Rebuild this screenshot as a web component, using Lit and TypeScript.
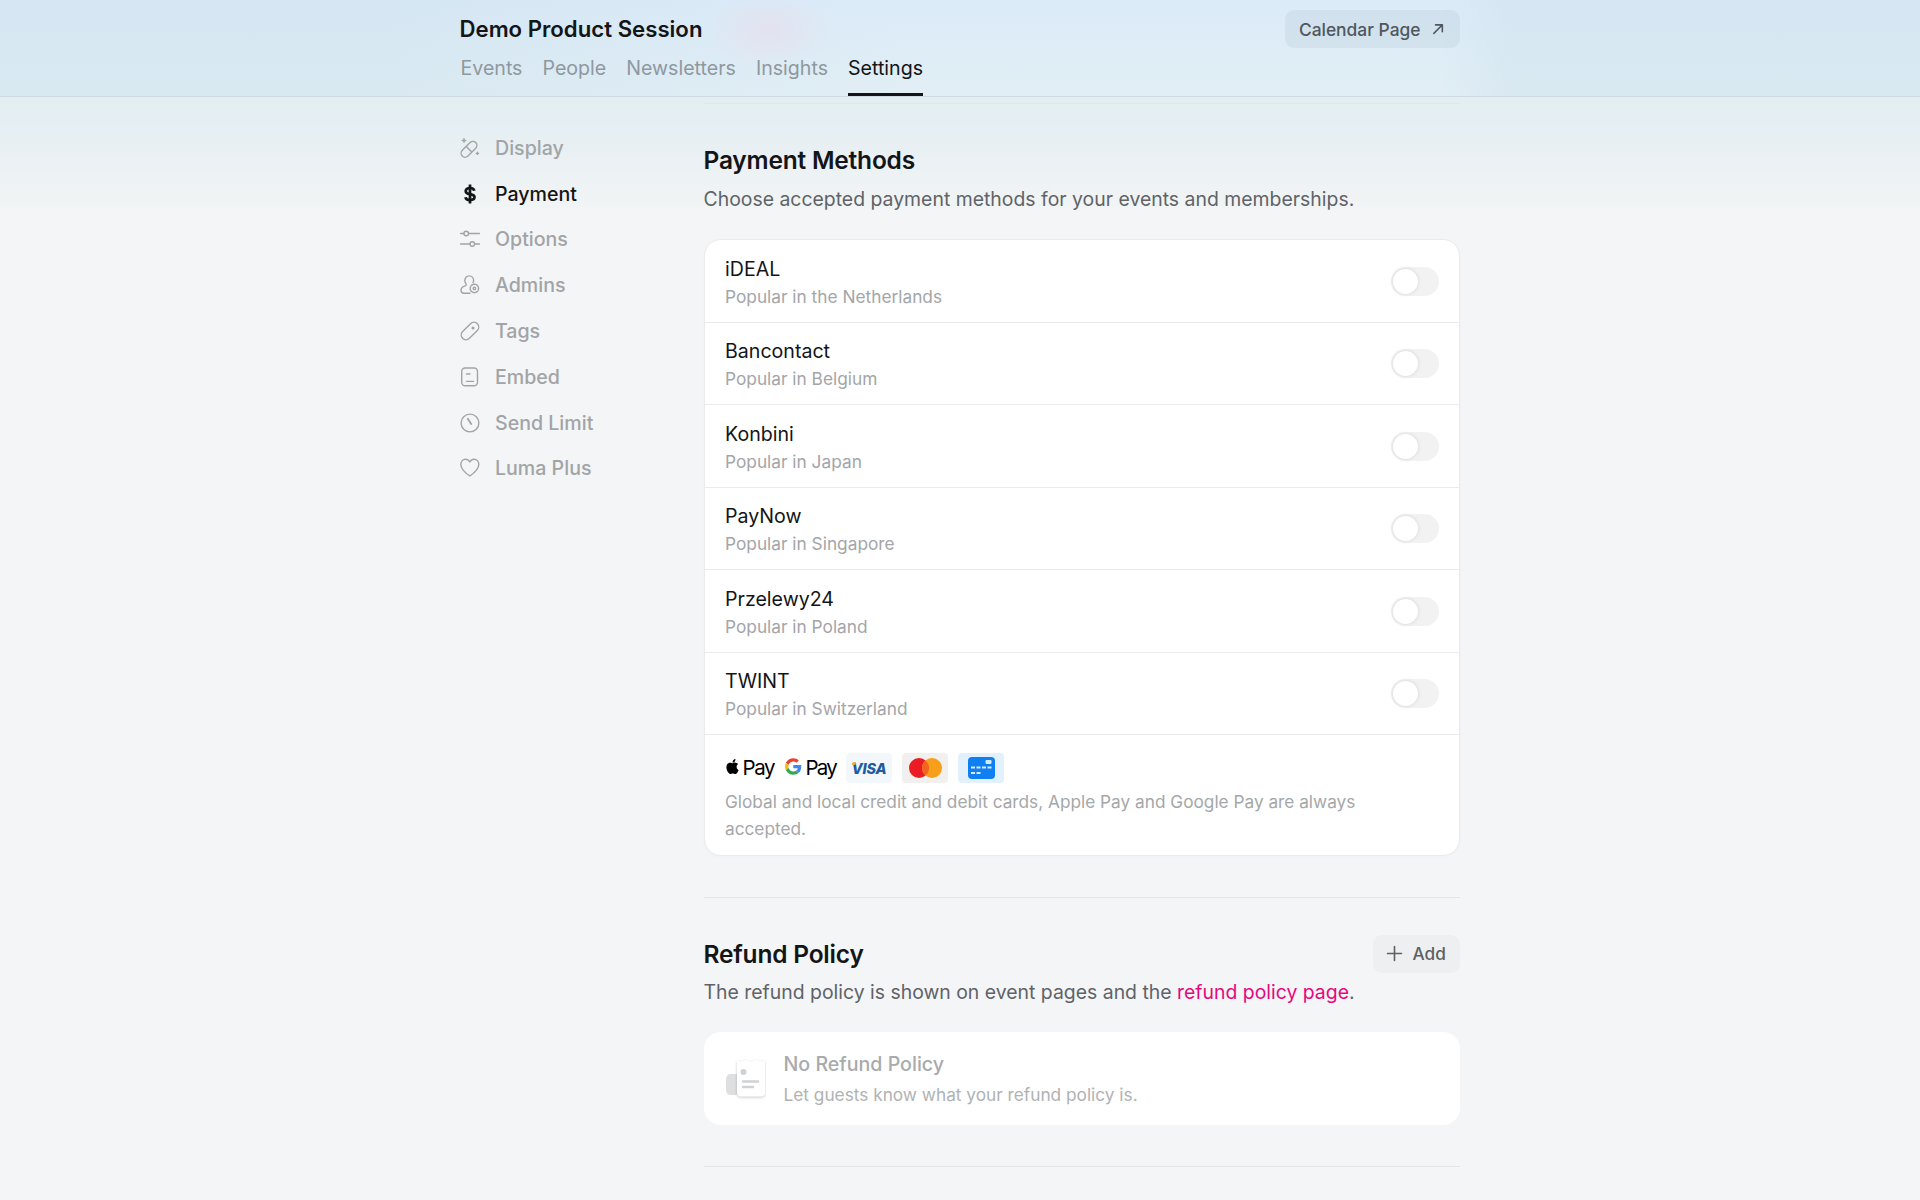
import { LitElement, html, css, svg } from "lit";
import { customElement } from "lit/decorators.js";

const stroke = (content: unknown) => html`<svg class="ico" viewBox="0 0 20 20" fill="none" stroke="currentColor" stroke-width="1.4" stroke-linecap="round" stroke-linejoin="round">${content}</svg>`;

const navIcons: Record<string, unknown> = {
  Display: stroke(svg`<rect x="-9.500" y="-4" width="19" height="8" rx="4" transform="translate(9 11.300) rotate(-45)"/><path d="M6.700 9l4.600 4.600"/><path d="M4 .8v3.400M2.300 2.500h3.400M17.400 14.200v2.400M16.200 15.400h2.400"/>`),
  Payment: html`<svg class="ico" viewBox="0 0 20 20" fill="none" stroke="currentColor" stroke-width="2.700" stroke-linecap="butt"><path d="M14.300 6.800C14 5 12.200 4 10 4 7.400 4 5.700 5.300 5.700 7.200c0 4.200 8.800 1.800 8.800 5.900 0 1.900-1.800 3-4.500 3-2.500 0-4.200-1-4.600-2.900"/><path d="M10 .5v19"/></svg>`,
  Options: stroke(svg`<path d="M.6 4.500h3.200M8.600 4.500h10.800M.6 15h9.300M14.700 15h4.700"/><circle cx="6.200" cy="4.500" r="2.300"/><circle cx="12.300" cy="15" r="2.300"/>`),
  Admins: stroke(svg`<path d="M10 18.300H4.200C2.300 18.300 1 17.100 1 15.300c0-2 1.300-3.300 3.600-4.100 1.500-.5 2-1.600 1.200-2.800C5.100 7.500 4.800 6.500 4.800 5.500 4.800 2.800 6.700.9 9.200.9s4.400 1.900 4.400 4.600c0 .8-.2 1.500-.5 2.100"/><circle cx="14.400" cy="13.400" r="4.200" stroke-dasharray="2.200 .9"/><circle cx="14.400" cy="13.400" r="1.200"/>`),
  Tags: stroke(svg`<rect x="-10.400" y="-4.800" width="20.800" height="9.600" rx="4.800" transform="translate(10 10) rotate(-45)"/><circle cx="13" cy="7" r=".8"/>`),
  Embed: stroke(svg`<rect x="1.700" y="1" width="15.800" height="17.800" rx="3.500"/><path d="M6.500 7h3.500M6.500 14.400h7"/>`),
  "Send Limit": stroke(svg`<circle cx="10" cy="10" r="8.900"/><path d="M7.800 5.800l3.400 5.200" stroke-width="1.800"/>`),
  "Luma Plus": stroke(svg`<path d="M9.800 18C4.800 14.500.8 11.300.8 6.400.8 3.300 3 1.200 5.500 1.200c1.900 0 3.300 1 4.300 2.800 1-1.800 2.400-2.800 4.300-2.800 2.500 0 4.700 2.100 4.700 5.200 0 4.900-4 8.100-9 11.600z"/>`),
};

const tabs = ["Events", "People", "Newsletters", "Insights", "Settings"];
const side = ["Display", "Payment", "Options", "Admins", "Tags", "Embed", "Send Limit", "Luma Plus"];
const methods: [string, string][] = [
  ["iDEAL", "Popular in the Netherlands"],
  ["Bancontact", "Popular in Belgium"],
  ["Konbini", "Popular in Japan"],
  ["PayNow", "Popular in Singapore"],
  ["Przelewy24", "Popular in Poland"],
  ["TWINT", "Popular in Switzerland"],
];

@customElement("app-root")
export class AppRoot extends LitElement {
  static styles = css`
    :host {
      display: block;
      height: 1200px;
      overflow: hidden;
      font-family: Inter, "Liberation Sans", sans-serif;
      color: #131517;
      background:
        linear-gradient(180deg, #e2eef1 97px, #e5eff3 122px, #e9f0f4 150px, #edf2f4 175px, #f1f4f5 204px, #f4f5f7 214px, #f4f5f7 100%);
    }
    .header {
      height: 97px;
      box-sizing: border-box;
      border-bottom: 1px solid #ccd9e0;
      background:
        radial-gradient(ellipse 62px 38px at 770px 30px, rgba(232, 222, 236, 0.7), transparent 100%),
        linear-gradient(90deg, rgba(198, 220, 232, 0.28) 0, rgba(198, 220, 232, 0.28) 380px, transparent 900px, transparent 1440px, rgba(198, 220, 232, 0.28) 1510px),
        linear-gradient(180deg, #dbebf8 0, #e1eef5 100%);
    }
    .wrap {
      width: 1000px;
      margin-left: 459.500px;
    }
    .top {
      display: flex;
      justify-content: space-between;
      align-items: center;
      padding-top: 10px;
      height: 38px;
    }
    .title {
      font-size: 22.200px;
      font-weight: 600;
      line-height: 27px;
      padding-bottom: 1px;
    }
    .cal {
      display: flex;
      align-items: center;
      gap: 11px;
      height: 38px;
      box-sizing: border-box;
      padding: 0 15px 0 14px;
      border-radius: 9px;
      background: rgba(70, 100, 120, 0.07);
      color: #4e5760;
      font-size: 17.400px;
      font-weight: 500;
    }
    .cal svg {
      width: 12px;
      height: 12px;
      margin-right: 1px;
    }
    .tabs {
      display: flex;
      gap: 20px;
      margin-top: 7px;
      padding-left: 1px;
    }
    .tab {
      height: 41px;
      box-sizing: border-box;
      padding-top: 1px;
      font-size: 19.600px;
      line-height: 24px;
      color: #8f989f;
    }
    .tab.on {
      color: #131517;
      border-bottom: 3px solid #131517;
    }
    .body {
      display: flex;
    }
    .side {
      width: 244px;
      flex: none;
      padding-top: 27.900px;
    }
    .item {
      display: flex;
      align-items: center;
      gap: 15.500px;
      height: 45.800px;
      font-size: 19.600px;
      font-weight: 500;
      color: #a1a4a6;
    }
    .item.on {
      color: #131517;
    }
    .ico {
      width: 20px;
      height: 20px;
      flex: none;
      overflow: visible;
    }
    .main {
      width: 756px;
      flex: none;
      padding-top: 6px;
    }
    .rule {
      height: 1px;
      background: #e2e6e8;
    }
    .h2 {
      margin: 0;
      font-size: 24.500px;
      line-height: 30px;
      font-weight: 600;
      letter-spacing: -0.2px;
    }
    .pay-h {
      margin-top: 41px;
    }
    .lead {
      margin: 8.500px 0 0;
      font-size: 19.420px;
      line-height: 30px;
      color: #5f6367;
    }
    .lead a {
      color: #e5097f;
      text-decoration: none;
    }
    .card {
      margin-top: 25.500px;
      border: 1px solid #ebebed;
      border-radius: 17px;
      background: #fff;
      box-shadow: 0 1px 4px rgba(0, 0, 0, 0.02);
      overflow: hidden;
    }
    .row {
      height: 82.500px;
      box-sizing: border-box;
      display: flex;
      align-items: center;
      justify-content: space-between;
      padding: 0 20px 0 20.500px;
      border-bottom: 1px solid #ebebed;
    }
    .txt {
      padding-top: 4px;
    }
    .name {
      font-size: 19.600px;
      line-height: 27.500px;
    }
    .sub {
      font-size: 17.300px;
      line-height: 26px;
      color: #a3a5a8;
      margin-top: 0.500px;
    }
    .toggle {
      width: 48px;
      height: 29px;
      border-radius: 15px;
      background: #f2f2f3;
      display: flex;
      align-items: center;
      padding-left: 2px;
      box-sizing: border-box;
      margin-top: 1px;
    }
    .knob {
      width: 25px;
      height: 25px;
      border-radius: 50%;
      background: #fff;
      box-shadow: 0 0 4px rgba(0, 0, 0, 0.12);
    }
    .foot {
      padding: 18px 60px 12.500px 20.500px;
    }
    .logos {
      display: flex;
      align-items: center;
      height: 30px;
    }
    .pay {
      display: flex;
      align-items: center;
      flex: none;
      width: 50px;
      color: #000;
      font-size: 20.500px;
      letter-spacing: -1.400px;
      padding-bottom: 1px;
    }
    .apple {
      width: 15px;
      height: 17px;
      margin: -2px 2.500px 0 0;
    }
    .gpay {
      margin-left: 10px;
      width: 51px;
      letter-spacing: -1.800px;
    }
    .g {
      width: 17px;
      height: 17px;
      margin: -2px 4px 0 0;
    }
    .badge {
      width: 46px;
      height: 30px;
      border-radius: 4px;
      display: flex;
      align-items: center;
      justify-content: center;
      margin-left: 10px;
      flex: none;
    }
    .visa {
      position: relative;
      background: #f2f7fc;
      color: #1f5b9e;
      font-size: 14.500px;
      font-weight: 800;
      font-style: italic;
      letter-spacing: -0.2px;
    }
    .visa::before {
      content: "";
      position: absolute;
      left: 6px;
      top: 9px;
      width: 4px;
      height: 3px;
      border-radius: 2px 0 2px 0;
      background: #e9ae3f;
    }
    .mc {
      background: #f1f0ee;
    }
    .bank {
      background: #e2f1fd;
    }
    .badge svg {
      display: block;
    }
    .note {
      margin-top: 6px;
      font-size: 17.240px;
      line-height: 26.500px;
      color: #a5a7a9;
    }
    .sep {
      margin-top: 41.500px;
    }
    .refund-top {
      display: flex;
      justify-content: space-between;
      align-items: center;
      margin-top: 36.500px;
      height: 38px;
    }
    .add {
      display: flex;
      align-items: center;
      gap: 10px;
      height: 38px;
      width: 87px;
      box-sizing: border-box;
      padding-left: 13px;
      border-radius: 9px;
      background: #eeeff0;
      color: #5c5f63;
      font-size: 17.200px;
      font-weight: 500;
    }
    .add svg {
      width: 17px;
      height: 17px;
    }
    .refund-lead {
      margin-top: 4px;
    }
    .empty {
      margin-top: 25px;
      height: 93px;
      border-radius: 17px;
      background: #fff;
      display: flex;
      align-items: center;
      gap: 18px;
      padding-left: 20px;
    }
    .receipt {
      width: 42px;
      height: 44px;
      flex: none;
    }
    .et {
      font-size: 19.600px;
      font-weight: 500;
      line-height: 26px;
      color: #a8aaac;
      padding-top: 3px;
    }
    .es {
      font-size: 17.250px;
      line-height: 26px;
      margin-top: 5px;
      color: #b0b2b4;
    }
    .end {
      margin-top: 41px;
    }
  `;

  render() {
    return html`
      <div class="header">
        <div class="wrap">
          <div class="top">
            <div class="title">Demo Product Session</div>
            <div class="cal">
              Calendar Page
              <svg viewBox="0 0 13 13" fill="none" stroke="currentColor" stroke-width="1.700" stroke-linecap="round" stroke-linejoin="round"><path d="M2 11.200L11 2.200M3.800 2h7.400v7.400"/></svg>
            </div>
          </div>
          <div class="tabs">
            ${tabs.map((t) => html`<div class="tab ${t === "Settings" ? "on" : ""}">${t}</div>`)}
          </div>
        </div>
      </div>
      <div class="wrap body">
        <nav class="side">
          ${side.map((s) => html`<div class="item ${s === "Payment" ? "on" : ""}">${navIcons[s]}<span>${s}</span></div>`)}
        </nav>
        <main class="main">
          <div class="rule"></div>
          <h2 class="h2 pay-h">Payment Methods</h2>
          <p class="lead">Choose accepted payment methods for your events and memberships.</p>
          <div class="card">
            ${methods.map(
              ([n, s]) => html`<div class="row">
                <div class="txt">
                  <div class="name">${n}</div>
                  <div class="sub">${s}</div>
                </div>
                <div class="toggle"><div class="knob"></div></div>
              </div>`
            )}
            <div class="foot">
              <div class="logos">
                <div class="pay">
                  <svg class="apple" viewBox="0 0 24 24" fill="#000"><path d="M12.152 6.896c-.948 0-2.415-1.078-3.96-1.04-2.04.027-3.91 1.183-4.961 3.014-2.117 3.675-.546 9.103 1.519 12.09 1.013 1.454 2.208 3.09 3.792 3.039 1.52-.065 2.09-.987 3.935-.987 1.831 0 2.35.987 3.96.948 1.637-.026 2.676-1.48 3.676-2.948 1.156-1.688 1.636-3.325 1.662-3.415-.039-.013-3.182-1.221-3.22-4.857-.026-3.04 2.48-4.494 2.597-4.559-1.429-2.09-3.623-2.324-4.39-2.376-2-.156-3.675 1.09-4.61 1.09zM15.53 3.83c.843-1.012 1.4-2.427 1.245-3.83-1.207.052-2.662.805-3.532 1.818-.78.896-1.454 2.338-1.273 3.714 1.338.104 2.715-.688 3.559-1.701"/></svg>
                  <span>Pay</span>
                </div>
                <div class="pay gpay">
                  <svg class="g" viewBox="0 0 48 48"><path fill="#EA4335" d="M24 9.500c3.540 0 6.710 1.220 9.210 3.600l6.850-6.850C35.900 2.380 30.470 0 24 0 14.620 0 6.510 5.380 2.560 13.220l7.980 6.190C12.430 13.720 17.740 9.500 24 9.500z"/><path fill="#4285F4" d="M46.980 24.550c0-1.570-.15-3.090-.38-4.550H24v9.020h12.940c-.58 2.960-2.260 5.480-4.780 7.180l7.730 6c4.510-4.180 7.090-10.360 7.090-17.650z"/><path fill="#FBBC05" d="M10.530 28.590c-.48-1.450-.76-2.990-.76-4.590s.27-3.140.76-4.590l-7.980-6.190C.92 16.460 0 20.120 0 24c0 3.880.92 7.540 2.560 10.780l7.970-6.190z"/><path fill="#34A853" d="M24 48c6.480 0 11.930-2.130 15.890-5.810l-7.730-6c-2.150 1.450-4.920 2.300-8.160 2.300-6.260 0-11.570-4.220-13.470-9.910l-7.980 6.190C6.510 42.620 14.620 48 24 48z"/></svg>
                  <span>Pay</span>
                </div>
                <div class="badge visa">VISA</div>
                <div class="badge mc">
                  <svg width="33" height="20" viewBox="0 0 33 20"><circle cx="10" cy="10" r="10" fill="#eb1c24"/><circle cx="23" cy="10" r="10" fill="#f79e1b"/><path d="M16.500 2.400a10 10 0 0 1 0 15.200a10 10 0 0 1 0-15.200z" fill="#f2641f"/></svg>
                </div>
                <div class="badge bank">
                  <svg width="27" height="22" viewBox="0 0 27 22"><rect width="27" height="22" rx="4" fill="#0f7ff2"/><rect x="17.500" y="3" width="6" height="4" rx="1" fill="#d5ebff"/><path d="M3 10.500h4M8.500 10.500h4M14 10.500h4M19.500 10.500h4M3 16h4M8.500 16h4" stroke="#d5ebff" stroke-width="1.800"/></svg>
                </div>
              </div>
              <div class="note">Global and local credit and debit cards, Apple Pay and Google Pay are always accepted.</div>
            </div>
          </div>
          <div class="rule sep"></div>
          <div class="refund-top">
            <h2 class="h2">Refund Policy</h2>
            <div class="add">
              <svg viewBox="0 0 17 17" fill="none" stroke="currentColor" stroke-width="1.600" stroke-linecap="round"><path d="M8.500 1.500v14M1.500 8.500h14"/></svg>
              Add
            </div>
          </div>
          <p class="lead refund-lead">The refund policy is shown on event pages and the <a>refund policy page</a>.</p>
          <div class="empty">
            <svg class="receipt" viewBox="0 0 42 44">
              <defs><filter id="s" x="-30%" y="-30%" width="160%" height="160%"><feGaussianBlur stdDeviation="1.500"/></filter></defs>
              <path d="M2 23c0-3 2-5 4.500-5H14v21H7c-3 0-5-2-5-5z" fill="#dedfe0"/>
              <path d="M13 5l4 2 5-2.500 5 2.500 5-2.500 5 2 4-1.500v33c0 2-1.500 3.500-3.500 3.500H16.500c-2 0-3.500-1.500-3.500-3.500z" fill="#000" opacity=".2" filter="url(#s)"/>
              <path d="M13 4l4 2 5-2.500 5 2.500 5-2.500 5 2 4-1.500v33c0 2-1.500 3.500-3.500 3.500H16.500c-2 0-3.500-1.500-3.500-3.500z" fill="#fff"/>
              <circle cx="19.500" cy="16" r="3" fill="#d0d1d3"/>
              <path d="M19 25.500h15M19 31h10" stroke="#d0d1d3" stroke-width="2.400" stroke-linecap="round"/>
            </svg>
            <div>
              <div class="et">No Refund Policy</div>
              <div class="es">Let guests know what your refund policy is.</div>
            </div>
          </div>
          <div class="rule end"></div>
        </main>
      </div>
    `;
  }
}
